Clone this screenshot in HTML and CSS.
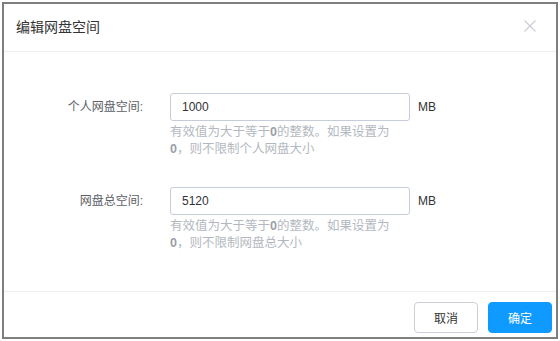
FILE: index.html
```html
<!DOCTYPE html>
<html lang="zh-CN">

<head>
  <meta charset="UTF-8" />
  <meta name="viewport" content="width=device-width, initial-scale=1.0" />
  <title>编辑网盘空间</title>
  <link rel="stylesheet" href="styles.css">
</head>

<body>
  <div class="dialog">
    <div class="header">
      <span class="title">编辑网盘空间</span>
      <svg class="close" width="12" height="12" viewBox="0 0 12 12">
        <path d="M0.5 0.5 L11.5 11.5 M11.5 0.5 L0.5 11.5" stroke="#c9ced6" stroke-width="1.2" fill="none" />
      </svg>
    </div>

    <div class="body">
      <div class="row">
        <label class="label">个人网盘空间:</label>
        <div class="field">
          <div class="line">
            <input class="input" type="text" value="1000" />
            <span class="unit">MB</span>
          </div>
          <div class="help">有效值为大于等于<b>0</b>的整数。如果设置为<b>0</b>，则不限制个人网盘大小</div>
        </div>
      </div>

      <div class="row">
        <label class="label">网盘总空间:</label>
        <div class="field">
          <div class="line">
            <input class="input" type="text" value="5120" />
            <span class="unit">MB</span>
          </div>
          <div class="help">有效值为大于等于<b>0</b>的整数。如果设置为<b>0</b>，则不限制网盘总大小</div>
        </div>
      </div>
    </div>

    <div class="footer">
      <button class="btn">取消</button>
      <button class="btn primary">确定</button>
    </div>
  </div>
</body>

</html>
```

FILE: styles.css
```css
body {
  margin: 0;
  font-family: "Liberation Sans", "Noto Sans CJK SC", sans-serif;
  font-size: 12px;
  color: #333;
  background: #fff;
}

.dialog {
  margin: 2px;
  border: 2px solid #7f7f7f;
  height: 333px;
  background: #fff;
  display: flex;
  flex-direction: column;
}

.header {
  height: 47px;
  border-bottom: 1px solid #eceef2;
  display: flex;
  align-items: center;
  justify-content: space-between;
  padding: 0 20px 0 12px;
}

.title {
  font-size: 14px;
  color: #333;
  margin-top: -4px;
}

.close {
  margin-top: -4px;
}

.body {
  flex: 1;
  padding-top: 41px;
}

.row {
  display: flex;
  margin-bottom: 29px;
}

.label {
  width: 139px;
  text-align: right;
  color: #5c6066;
  line-height: 28px;
  margin-right: 27px;
}

.line {
  display: flex;
  align-items: center;
}

.input {
  width: 240px;
  height: 28px;
  box-sizing: border-box;
  border: 1px solid #c4cdd9;
  border-radius: 3px;
  padding: 0 11px;
  font-family: "Liberation Sans", sans-serif;
  font-size: 12px;
  color: #333;
  outline: none;
}

.unit {
  margin-left: 8px;
  color: #333;
}

.help {
  width: 230px;
  margin-top: 3px;
  font-size: 12.5px;
  line-height: 17px;
  color: #b3b8c0;
}

.help b {
  color: #9a9fa8;
}

.footer {
  border-top: 1px solid #eceef2;
  display: flex;
  justify-content: flex-end;
  gap: 10px;
  padding: 10px 4px 4px;
}

.btn {
  width: 64px;
  height: 31px;
  border: 1px solid #ccd0d6;
  border-radius: 4px;
  background: #fff;
  font-family: "Noto Sans CJK SC", sans-serif;
  font-size: 12px;
  color: #333;
}

.primary {
  border-color: #0e9aff;
  background: #0e9aff;
  color: #fff;
}
```
